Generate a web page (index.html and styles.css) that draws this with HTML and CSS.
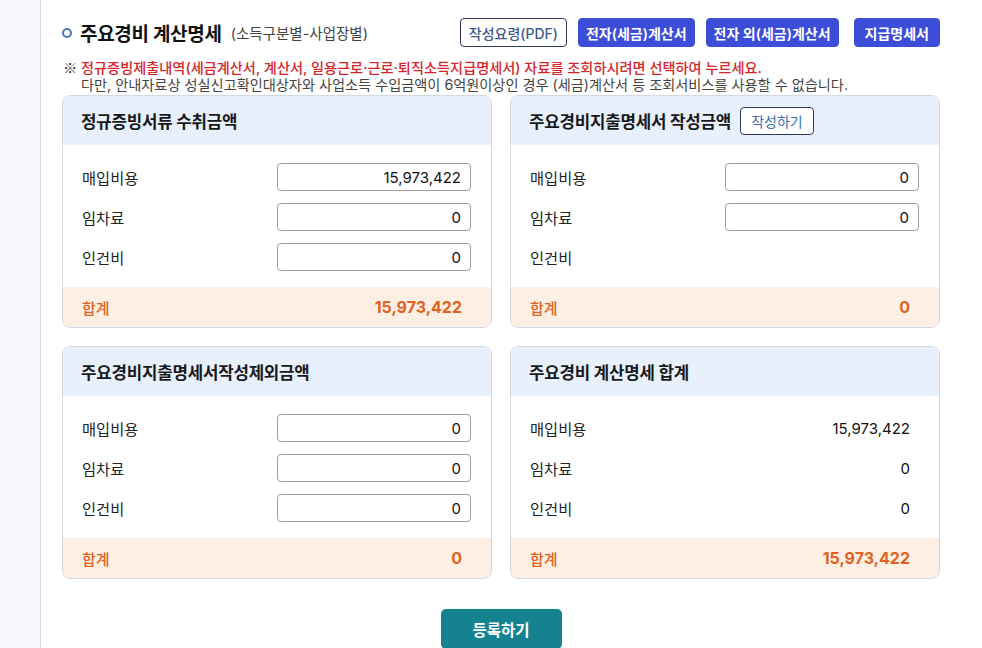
FILE: index.html
```html
<!DOCTYPE html>
<html lang="ko">
<head>
<meta charset="utf-8">
<link rel="stylesheet" href="styles.css">
</head>
<body>
<div class="layout">
  <aside class="sidebar"></aside>
  <main class="main">
    <div class="head">
      <h2 class="title"><span class="ring"></span>주요경비 계산명세<span class="sub">(소득구분별-사업장별)</span></h2>
      <div class="actions">
        <button class="btn btn-outline">작성요령(PDF)</button>
        <button class="btn btn-blue">전자(세금)계산서</button>
        <button class="btn btn-blue">전자 외(세금)계산서</button>
        <button class="btn btn-blue btn-last">지급명세서</button>
      </div>
    </div>
    <div class="notice">
      <p class="red"><span class="mark">※</span><b>정규증빙제출내역(세금계산서, 계산서, 일용근로·근로·퇴직소득지급명세서) 자료를 조회하시려면 선택하여 누르세요.</b></p>
      <p class="gray">다만, 안내자료상 성실신고확인대상자와 사업소득 수입금액이 6억원이상인 경우 (세금)계산서 등 조회서비스를 사용할 수 없습니다.</p>
    </div>
    <div class="grid">
      <section class="card">
        <div class="card-head">정규증빙서류 수취금액</div>
        <div class="card-body">
          <div class="row"><span class="lbl">매입비용</span><input class="inp" value="15,973,422"></div>
          <div class="row"><span class="lbl">임차료</span><input class="inp" value="0"></div>
          <div class="row"><span class="lbl">인건비</span><input class="inp" value="0"></div>
        </div>
        <div class="card-foot"><span>합계</span><strong>15,973,422</strong></div>
      </section>
      <section class="card">
        <div class="card-head">주요경비지출명세서 작성금액<button class="btn-small">작성하기</button></div>
        <div class="card-body">
          <div class="row"><span class="lbl">매입비용</span><input class="inp" value="0"></div>
          <div class="row"><span class="lbl">임차료</span><input class="inp" value="0"></div>
          <div class="row"><span class="lbl">인건비</span></div>
        </div>
        <div class="card-foot"><span>합계</span><strong>0</strong></div>
      </section>
      <section class="card">
        <div class="card-head">주요경비지출명세서작성제외금액</div>
        <div class="card-body">
          <div class="row"><span class="lbl">매입비용</span><input class="inp" value="0"></div>
          <div class="row"><span class="lbl">임차료</span><input class="inp" value="0"></div>
          <div class="row"><span class="lbl">인건비</span><input class="inp" value="0"></div>
        </div>
        <div class="card-foot"><span>합계</span><strong>0</strong></div>
      </section>
      <section class="card">
        <div class="card-head">주요경비 계산명세 합계</div>
        <div class="card-body">
          <div class="row"><span class="lbl">매입비용</span><span class="val">15,973,422</span></div>
          <div class="row"><span class="lbl">임차료</span><span class="val">0</span></div>
          <div class="row"><span class="lbl">인건비</span><span class="val">0</span></div>
        </div>
        <div class="card-foot"><span>합계</span><strong>15,973,422</strong></div>
      </section>
    </div>
    <div class="submit-wrap"><button class="btn-submit">등록하기</button></div>
  </main>
</div>
</body>
</html>
```

FILE: styles.css
```css
* { box-sizing: border-box; }
html, body { margin: 0; padding: 0; height: 100%; overflow: hidden; }
body {
  font-family: "Inter", "Noto Sans CJK KR", "Noto Sans", sans-serif;
  color: #222;
  background: #fff;
}
.layout { display: flex; height: 648px; }
.sidebar {
  width: 41px;
  flex: none;
  background: #f5f7fb;
  border-right: 1px solid #d3dae6;
}
.main {
  width: 878px;
  margin-left: 21px;
  padding-top: 18px;
}
.head {
  display: flex;
  justify-content: space-between;
  align-items: center;
  height: 29px;
}
.title {
  margin: 0;
  display: flex;
  align-items: center;
  font-size: 19px;
  font-weight: 700;
  color: #111;
  letter-spacing: -0.3px;
  white-space: nowrap;
}
.ring {
  width: 10px; height: 10px;
  border: 2.8px solid #4b78b7;
  border-radius: 50%;
  margin: 0 8px 0 0;
}
.sub {
  font-size: 14.5px;
  font-weight: 400;
  color: #444;
  margin-left: 9px;
  letter-spacing: 0;
}
.actions { display: flex; gap: 11px; }
.btn {
  height: 29px;
  padding: 0 7px;
  border-radius: 4px;
  font-family: inherit;
  font-size: 14px;
  font-weight: 600;
  white-space: nowrap;
  cursor: pointer;
}
.btn-outline {
  background: #fff;
  border: 1px solid #2f3b66;
  color: #3e5a8e;
  font-weight: 500;
  padding: 0 8px;
}
.btn-blue {
  background: #3c4dd8;
  border: 1px solid #3c4dd8;
  color: #fff;
}
.btn-last { padding: 0 10px; margin-left: 4px; }
.notice { margin-top: 12px; font-size: 14.2px; line-height: 17px; }
.notice p { margin: 0; padding-left: 19px; white-space: nowrap; }
.notice .red { text-indent: -18px; }
.notice .mark {
  font-family: "Noto Sans CJK KR", sans-serif;
  color: #333;
  display: inline-block;
  width: 18px;
  text-indent: 0;
}
.notice .red b { color: #d7262b; font-weight: 500; }
.notice .gray { color: #444; }

.grid {
  margin-top: 2px;
  display: grid;
  grid-template-columns: 430px 430px;
  gap: 18px;
}
.card {
  border: 1px solid #d3d9e3;
  border-radius: 8px;
  overflow: hidden;
  background: #fff;
}
.card-head {
  height: 49px;
  background: #e8f0fd;
  display: flex;
  align-items: center;
  padding-left: 18px;
  font-size: 16.8px;
  font-weight: 700;
  color: #1a1a1a;
  letter-spacing: -0.2px;
}
.btn-small {
  margin-left: 9px;
  height: 28px;
  width: 74px;
  background: #fff;
  border: 1px solid #2f3b66;
  border-radius: 4px;
  color: #3a6cb5;
  font-family: inherit;
  font-size: 14px;
  letter-spacing: 0;
}
.card-body {
  padding: 18px 20px 16px 19px;
  display: flex;
  flex-direction: column;
  gap: 12px;
}
.row {
  height: 28px;
  display: flex;
  align-items: center;
  justify-content: space-between;
}
.lbl { font-size: 15.3px; color: #222; }
.inp {
  width: 194px;
  height: 28px;
  border: 1px solid #9e9e9e;
  border-radius: 4px;
  text-align: right;
  padding: 0 9px;
  font-family: inherit;
  font-size: 15px;
  color: #111;
  background: #fff;
}
.val { font-size: 15px; color: #111; padding-right: 9px; }
.card-foot {
  height: 40px;
  background: #fdefe3;
  display: flex;
  align-items: center;
  justify-content: space-between;
  padding: 0 29px 0 19px;
  color: #e0621f;
}
.card-foot span { font-size: 15px; font-weight: 500; }
.card-foot strong { font-size: 16px; font-weight: 700; }
.submit-wrap { display: flex; justify-content: center; margin-top: 30px; }
.btn-submit {
  width: 121px;
  height: 40px;
  background: #15838f;
  border: none;
  border-radius: 5px;
  color: #fff;
  font-family: inherit;
  font-size: 15.5px;
  font-weight: 700;
}
```
